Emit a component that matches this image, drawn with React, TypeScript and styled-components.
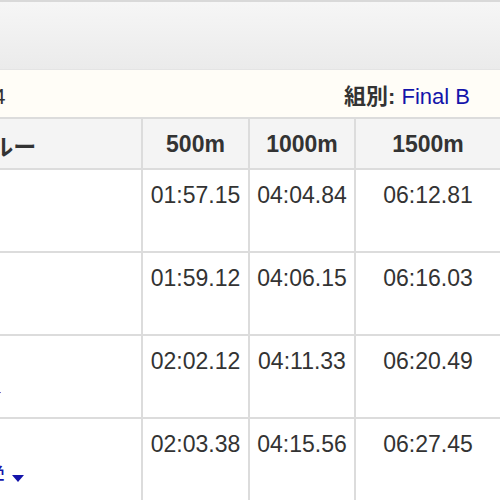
import React from "react";
import styled, { createGlobalStyle } from "styled-components";

const GlobalStyle = createGlobalStyle`
  html, body {
    margin: 0;
    padding: 0;
    background: #ffffff;
    font-family: "Liberation Sans", "Noto Sans CJK JP", Arial, sans-serif;
    color: #333333;
  }
`;

const Page = styled.div`
  width: 500px;
  height: 500px;
  overflow: hidden;
  background: #ffffff;
`;

const TopBar = styled.header`
  height: 67px;
  border-top: 2px solid #d9d9d9;
  border-bottom: 1px solid #e4e4e4;
  background: linear-gradient(#f6f6f6, #ebebeb);
`;

/* content scrolled horizontally: the left part of the table is off screen */
const Scrolled = styled.div`
  margin-left: -137px;
  width: 638px;
`;

const InfoRow = styled.div`
  display: flex;
  justify-content: space-between;
  align-items: center;
  height: 47px;
  padding: 0 31px 0 8px;
  background: #fffdf7;
  border-bottom: 2px solid #dcdcdc;
  font-size: 22px;
`;

const InfoItem = styled.span`
  white-space: nowrap;
`;

const Label = styled.b`
  font-weight: bold;
  color: #333333;
`;

const LinkText = styled.span`
  color: #1414aa;
`;

const Grid = styled.div`
  display: grid;
  grid-template-columns: 278px 105px 104px 144px;
  grid-template-rows: 49px repeat(4, 81px);
  gap: 2px;
  background: #dcdcdc;
`;

const HeadCell = styled.div`
  display: flex;
  align-items: center;
  justify-content: center;
  padding-top: 2px;
  box-sizing: border-box;
  background: #f4f4f4;
  font-size: 23px;
  font-weight: bold;
  color: #333333;
  white-space: nowrap;
`;

const TimeCell = styled.div`
  background: #ffffff;
  padding-top: 12px;
  box-sizing: border-box;
  text-align: center;
  font-size: 23px;
  line-height: 26px;
  color: #333333;
  white-space: nowrap;
`;

const CrewCell = styled.div`
  background: #ffffff;
  padding: 10px 0 0 4px;
  box-sizing: border-box;
  font-size: 23px;
  line-height: 32px;
  color: #1414aa;
  white-space: nowrap;
`;

const CrewLine = styled.div``;

const Caret = styled.span`
  display: inline-block;
  vertical-align: middle;
  margin-left: 7px;
  width: 0;
  height: 0;
  border-left: 6.5px solid transparent;
  border-right: 6.5px solid transparent;
  border-top: 7px solid #1414aa;
`;

type Row = { crew: string; sub: string; t500: string; t1000: string; t1500: string };

const rows: Row[] = [
  { crew: "NTT東日本", sub: "戸田中央", t500: "01:57.15", t1000: "04:04.84", t1500: "06:12.81" },
  { crew: "明治安田", sub: "日本大学", t500: "01:59.12", t1000: "04:06.15", t1500: "06:16.03" },
  { crew: "トヨタ紡織", sub: "早稲田大学", t500: "02:02.12", t1000: "04:11.33", t1500: "06:20.49" },
  { crew: "慶應義塾", sub: "慶應義塾大学", t500: "02:03.38", t1000: "04:15.56", t1500: "06:27.45" },
];

export default function App() {
  return (
    <Page>
      <GlobalStyle />
      <TopBar />
      <Scrolled>
        <InfoRow>
          <InfoItem>
            <Label>レース番号:</Label> 4
          </InfoItem>
          <InfoItem>
            <Label>組別:</Label> <LinkText>Final B</LinkText>
          </InfoItem>
        </InfoRow>
        <Grid>
          <HeadCell>クルー</HeadCell>
          <HeadCell>500m</HeadCell>
          <HeadCell>1000m</HeadCell>
          <HeadCell>1500m</HeadCell>
          {rows.map((r) => (
            <React.Fragment key={r.t500}>
              <CrewCell>
                <CrewLine>{r.crew}</CrewLine>
                <CrewLine>
                  {r.sub}
                  <Caret />
                </CrewLine>
              </CrewCell>
              <TimeCell>{r.t500}</TimeCell>
              <TimeCell>{r.t1000}</TimeCell>
              <TimeCell>{r.t1500}</TimeCell>
            </React.Fragment>
          ))}
        </Grid>
      </Scrolled>
    </Page>
  );
}
